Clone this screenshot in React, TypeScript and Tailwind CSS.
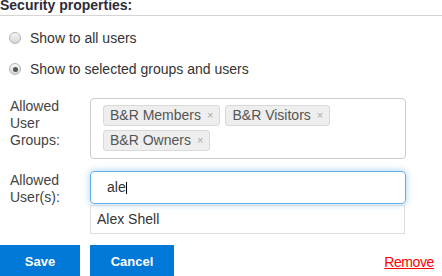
import React from "react";

type RadioProps = { label: string; checked?: boolean };

function Radio({ label, checked }: RadioProps) {
  return (
    <label className="flex h-[16px] items-center gap-[9px] pl-[9px] leading-[16px]">
      <span className="flex h-[12px] w-[12px] items-center justify-center rounded-full border border-[#b4b4b4] bg-gradient-to-b from-[#f6f6f6] to-[#d6d6d6]">
        {checked ? <span className="h-[5px] w-[5px] rounded-full bg-[#555]" /> : null}
      </span>
      <span>{label}</span>
    </label>
  );
}

function Tag({ text }: { text: string }) {
  return (
    <span className="flex h-[21px] items-center rounded-[3px] border border-[#d9d9d9] bg-[#eeeeee] pl-[6px] pr-[6px] leading-[19px] text-[#555]">
      {text}
      <span className="ml-[6px] text-[11px] text-[#aaa]">×</span>
    </span>
  );
}

export default function App() {
  return (
    <div className="h-[276px] w-[442px] overflow-hidden bg-white font-['Liberation_Sans',Arial,sans-serif] text-[14px] text-[#333]">
      <div className="h-[16px] border-b border-[#d4d4d4]">
        <span className="relative -top-[3px] block text-[14px] font-bold leading-[16px] text-[#2d2d3a]">
          Security properties:
        </span>
      </div>

      <div className="mt-[14px]">
        <Radio label="Show to all users" />
      </div>
      <div className="mt-[15px]">
        <Radio label="Show to selected groups and users" checked />
      </div>

      <div className="mt-[21px] flex">
        <div className="w-[90px] pl-[10px] pr-[14px] leading-[17px] text-[#444]">Allowed User Groups:</div>
        <div className="flex h-[61px] w-[316px] flex-wrap content-start gap-x-[5px] gap-y-[4px] rounded-[4px] border border-[#cccccc] px-[12px] pb-[7px] pt-[6px]">
          <Tag text="B&R Members" />
          <Tag text="B&R Visitors" />
          <Tag text="B&R Owners" />
        </div>
      </div>

      <div className="mt-[12px] flex">
        <div className="w-[90px] pl-[10px] pr-[14px] pt-[1px] leading-[17px] text-[#444]">Allowed User(s):</div>
        <div className="w-[316px]">
          <div className="flex h-[33px] items-center rounded-[4px] border border-[#66afe9] pl-[16px] shadow-[0_0_7px_rgba(102,175,233,0.6)]">
            <span>ale</span>
            <span className="h-[12px] w-px bg-black" />
          </div>
          <div className="mt-px flex h-[29px] w-[315px] items-center border border-[#dddddd] pl-[6px]">Alex Shell</div>
        </div>
      </div>

      <div className="mt-[11px] flex items-start">
        <button className="h-[34px] w-[80px] bg-[#0078d7] text-[13px] font-bold text-white">Save</button>
        <button className="ml-[10px] h-[34px] w-[84px] bg-[#0078d7] text-[13px] font-bold text-white">Cancel</button>
        <a className="ml-auto mr-[8px] mt-[7px] text-[14px] tracking-[-0.4px] text-[#ff0000] underline">Remove</a>
      </div>
    </div>
  );
}
